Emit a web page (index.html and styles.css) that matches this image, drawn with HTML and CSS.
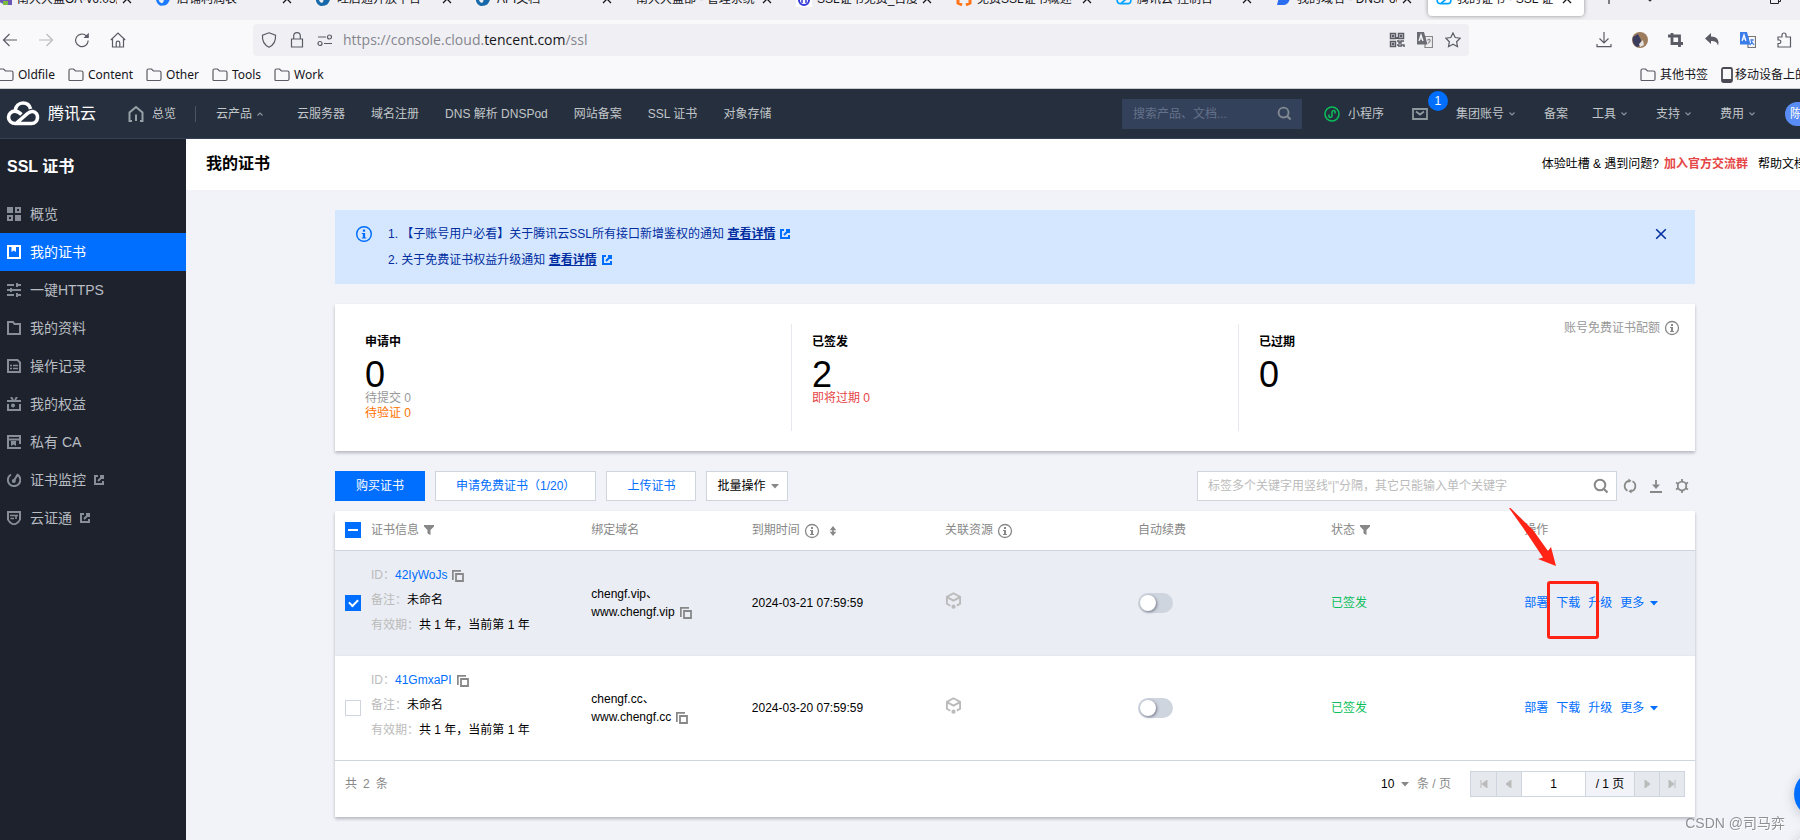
FILE: index.html
```html
<!DOCTYPE html>
<html lang="zh-CN">
<head>
    <meta charset="UTF-8">
    <meta name="viewport" content="width=device-width, initial-scale=1.0">
    <title>我的证书 - SSL 证书 - 控制台</title>
    <link rel="stylesheet" href="styles.css">
</head>
<body>
    <!-- Shared icons -->
    <svg class="sprite" width="0" height="0">
        <symbol id="i-folder" viewBox="0 0 16 16"><path d="M1 13V3.500a1.500 1.500 0 0 1 1.500-1.500h3l2 2h6a1.500 1.500 0 0 1 1.500 1.500V12a1.500 1.500 0 0 1-1.500 1.500H1.500z" fill="none" stroke="#5b5b66" stroke-width="1.200"/></symbol>
        <symbol id="i-close" viewBox="0 0 10 10"><path d="M1 1l8 8M9 1L1 9" fill="none" stroke="currentColor" stroke-width="1.300"/></symbol>
        <symbol id="i-down" viewBox="0 0 8 8"><path d="M1.500 2.500L4 5l2.500-2.500" fill="none" stroke="currentColor" stroke-width="1.200"/></symbol>
        <symbol id="i-tri" viewBox="0 0 8 8"><path d="M0 2h8L4 6.500z" fill="currentColor"/></symbol>
        <symbol id="i-info" viewBox="0 0 16 16"><circle cx="8" cy="8" r="6.500" fill="none" stroke="currentColor" stroke-width="1.300"/><path d="M7 4h2v2H7zM6 7h3v4h1v1H6v-1h1V8H6z" fill="currentColor"/></symbol>
        <symbol id="i-ext" viewBox="0 0 10 10"><path d="M4 1H1v8h8V6M6 1h3v3M9 1L4 6" fill="none" stroke="currentColor" stroke-width="2"/></symbol>
        <symbol id="i-copy" viewBox="0 0 12 12"><path d="M.8 10V.8H9M4 4h7v7H4z" fill="none" stroke="currentColor" stroke-width="1.800"/></symbol>
        <symbol id="i-filter" viewBox="0 0 10 10"><path d="M0 0h10v1.500L6.500 5v5l-3-1.500V5L0 1.500z" fill="currentColor"/></symbol>
        <symbol id="i-search" viewBox="0 0 16 16"><circle cx="7" cy="7" r="5.300" fill="none" stroke="currentColor" stroke-width="2"/><path d="M11 11l3.500 3.500" stroke="currentColor" stroke-width="2.200"/></symbol>
        <symbol id="i-cube" viewBox="0 0 16 16"><path d="M5 13L1.800 11V4.500L8 1.200l6.200 3.300V11l-3 1.800M1.800 4.800L8 8.200l6.200-3.400" fill="none" stroke="currentColor" stroke-width="1.800"/><circle cx="8" cy="13.800" r="2" fill="currentColor"/></symbol>
        <symbol id="i-cloud" viewBox="0 0 34 25"><path d="M10 22.500L21.500 12.500c2-1.800 3.600-2.300 5.300-2 3 .5 5 3 4.700 6.300-.3 3-2.600 5.700-6 5.700H9.500c-4 0-7-2.600-7-6.200 0-3.300 2.800-6.200 6.500-6.200 2.500 0 4.200 1.200 6.500 3.400M9.300 9.500C9.800 5 13 2 17 2c3.800 0 6.700 2.500 7.600 6" fill="none" stroke="currentColor" stroke-width="3.600"/></symbol>
    </svg>

    <!-- Browser tabs -->
    <div class="tabs">
        <div class="tab"><svg class="favicon" viewBox="0 0 16 16"><path d="M0 9h16v5H9z" fill="#6b57b8"/><path d="M7 10h5v4H7z" fill="#7dbb42"/></svg><span class="tab-title">南大大盆OA-v6.03版</span><svg class="x"><use href="#i-close"/></svg></div>
        <div class="tab"><svg class="favicon" viewBox="0 0 16 16"><path d="M1 7c1 8 7 8 8 3s3-6 4-6-1 10-6 9" fill="none" stroke="#1d7bff" stroke-width="2.600"/></svg><span class="tab-title">店铺利润表</span><svg class="x"><use href="#i-close"/></svg></div>
        <div class="tab"><svg class="favicon" viewBox="0 0 16 16"><path d="M1 7c1 8 7 8 8 3s3-6 4-6-1 10-6 9" fill="none" stroke="#1769aa" stroke-width="3.200"/></svg><span class="tab-title">旺店通开放平台</span><svg class="x"><use href="#i-close"/></svg></div>
        <div class="tab"><svg class="favicon" viewBox="0 0 16 16"><path d="M1 7c1 8 7 8 8 3s3-6 4-6-1 10-6 9" fill="none" stroke="#1769aa" stroke-width="3.200"/></svg><span class="tab-title">API文档</span><svg class="x"><use href="#i-close"/></svg></div>
        <div class="tab"><span class="tab-title">南大大盆部 - 管理系统</span><svg class="x"><use href="#i-close"/></svg></div>
        <div class="tab"><svg class="favicon" viewBox="0 0 16 16"><rect width="16" height="16" fill="#fff"/><circle cx="8" cy="9" r="5" fill="none" stroke="#3338d8" stroke-width="2"/><path d="M6 8v4M10 8v4" stroke="#3338d8" stroke-width="1.500"/></svg><span class="tab-title">SSL证书免费_百度搜索</span><svg class="x"><use href="#i-close"/></svg></div>
        <div class="tab"><svg class="favicon" viewBox="0 0 16 16"><path d="M5 3H2v9l4 2M11 3h3v9l-4 2" fill="none" stroke="#ff7316" stroke-width="3"/></svg><span class="tab-title">免费SSL证书概述</span><svg class="x"><use href="#i-close"/></svg></div>
        <div class="tab"><svg class="favicon blue"><use href="#i-cloud"/></svg><span class="tab-title">腾讯云-控制台</span><svg class="x"><use href="#i-close"/></svg></div>
        <div class="tab"><svg class="favicon" viewBox="0 0 16 16"><path d="M4 2h5c7 0 6 11-1 12H1z" fill="#2b6ff0"/></svg><span class="tab-title">我的域名 - DNSPod</span><svg class="x"><use href="#i-close"/></svg></div>
        <div class="tab tab-active"><svg class="favicon blue"><use href="#i-cloud"/></svg><span class="tab-title">我的证书 - SSL 证书</span><svg class="x"><use href="#i-close"/></svg></div>
        <svg class="tab-ctl" viewBox="0 0 16 16"><path d="M8 1v13M1 8h14" stroke="#333" stroke-width="1.200"/></svg>
        <svg class="tab-ctl" viewBox="0 0 16 16"><path d="M3 6l5 5 5-5" fill="none" stroke="#333" stroke-width="1.200"/></svg>
        <svg class="tab-ctl win" viewBox="0 0 16 16"><path d="M3.500 5.500h8v8h-8zM5.500 5V3.500h8v8H12" fill="none" stroke="#222"/></svg>
    </div>

    <!-- Browser toolbar -->
    <div class="nav">
        <button class="nav-btn" aria-label="后退"><svg viewBox="0 0 16 16"><path d="M15 8H1.500M7.500 2l-6 6 6 6"/></svg></button>
        <button class="nav-btn off" aria-label="前进"><svg viewBox="0 0 16 16"><path d="M1 8h13.500M8.500 2l6 6-6 6"/></svg></button>
        <button class="nav-btn" aria-label="刷新"><svg viewBox="0 0 16 16"><path d="M14.200 8.500A6.300 6.300 0 1 1 12.500 4"/><path d="M14.800.8V6H9.500z" fill="#5b5b66" stroke="none"/></svg></button>
        <button class="nav-btn" aria-label="主页"><svg viewBox="0 0 16 16"><path d="M.8 8L8 1l7.200 7M2.500 7v8h11V7M6.200 15v-4a1.800 1.800 0 0 1 3.600 0v4"/></svg></button>
        <div class="url">
            <svg viewBox="0 0 16 16"><path d="M8 .8l6.500 2.500C15 9 12.500 13 8 15.300 3.500 13 1 9 1.500 3.300z"/></svg>
            <svg viewBox="0 0 16 16"><path d="M2.500 7h11v8h-11zM4.700 7V4a3.300 3.300 0 0 1 6.600 0v3"/></svg>
            <svg viewBox="0 0 16 16"><path d="M1 5h8M7 11.500h8"/><circle cx="12.500" cy="5" r="2"/><circle cx="3" cy="11.500" r="2"/></svg>
            <span class="address">https://console.cloud.<b>tencent.com</b>/ssl</span>
            <svg viewBox="0 0 16 16"><path d="M1.500 1.500h5v5h-5zM9.500 1.500h5v5h-5zM1.500 9.500h5v5h-5zM3.500 3.500h1v1h-1zM11.500 3.500h1v1h-1zM3.500 11.500h1v1h-1zM8 9h2v2h2V9h3M8 13h2v2M12 15v-2h3v2M8 7V5" stroke-width="1.500"/></svg>
            <svg viewBox="0 0 16 16"><path d="M8 4.500h7.500v11H8z" stroke="#888"/><path d="M0 0h7l3.500 12.500H0z" fill="#6b6b74" stroke="none"/><path d="M2 9l2-6 2 6M2.800 7h2.500" stroke="#fff"/><path d="M10.500 8.500c1-2 3-1 2.500.5s-1.500 1-1.500 2.500" stroke="#888"/></svg>
            <svg viewBox="0 0 16 16"><path d="M8 .9l2.200 4.600 5 .7-3.600 3.500.9 5L8 12.300l-4.500 2.400.9-5L.8 6.200l5-.7z"/></svg>
        </div>
        <button class="nav-btn" aria-label="下载"><svg viewBox="0 0 16 16"><path d="M8 0v11M3.500 6.500L8 11l4.500-4.500M1 12v2.700h14V12"/></svg></button>
        <button class="nav-btn" aria-label="头像"><svg viewBox="0 0 16 16"><circle cx="8" cy="8" r="8" fill="#9c7c5c" stroke="none"/><path d="M1 5l5-3 3 6-1 6-3 1C1 13 0 8 1 5z" fill="#3b3c5e" stroke="none"/><path d="M7 12l4-4 1 5-4 2z" fill="#e6e1dd" stroke="none"/></svg></button>
        <button class="nav-btn" aria-label="截图"><svg viewBox="0 0 16 16"><path d="M4 1v10.500h11M0 4h11.500v11" stroke-width="2.800"/></svg></button>
        <button class="nav-btn" aria-label="撤销"><svg viewBox="0 0 16 16"><path d="M1 6.500L7 1v3.500c7 0 8.500 5 7 9-1-3.500-3-4.500-7-4.500V12z" fill="#5b5b66" stroke="none"/></svg></button>
        <button class="nav-btn" aria-label="翻译"><svg viewBox="0 0 16 16"><path d="M8 4.500h7.500v11H8z" stroke="#777"/><path d="M0 0h7l3.500 12.500H0z" fill="#3b7de8" stroke="none"/><path d="M2 9l2-6 2 6M2.800 7h2.500" stroke="#fff"/><path d="M10 8h4M12 7v1c0 3-1 4-2 5M11 9l3 4" stroke="#3b7de8"/></svg></button>
        <button class="nav-btn" aria-label="扩展"><svg viewBox="0 0 16 16"><path d="M2 5h4V3a2 2 0 0 1 4 0v2h4.500v10H2v-3.500h1.500a1.800 1.800 0 0 0 0-3.500H2z"/></svg></button>
    </div>

    <!-- Bookmarks -->
    <div class="bookmarks">
        <a href="#"><svg><use href="#i-folder"/></svg>Oldfile</a>
        <a href="#"><svg><use href="#i-folder"/></svg>Content</a>
        <a href="#"><svg><use href="#i-folder"/></svg>Other</a>
        <a href="#"><svg><use href="#i-folder"/></svg>Tools</a>
        <a href="#"><svg><use href="#i-folder"/></svg>Work</a>
        <a href="#" class="push"><svg><use href="#i-folder"/></svg>其他书签</a>
        <a href="#" class="cut"><svg class="phone" viewBox="0 0 12 16"><rect x="1" y="1" width="10" height="14" rx="1.500" fill="none" stroke="#4a4a55" stroke-width="1.800"/><path d="M1 13h10" stroke="#4a4a55" stroke-width="2"/></svg>移动设备上的书签</a>
    </div>

    <!-- Console header -->
    <header class="header">
        <a href="#" class="logo"><svg><use href="#i-cloud"/></svg>腾讯云</a>
        <a href="#" class="home"><svg viewBox="0 0 16 16"><path d="M4 15H1.500V6.500L8 1l6.500 5.500V15H12M8 8.500V15" fill="none" stroke="currentColor" stroke-width="2"/></svg>总览</a>
        <nav class="menu">
            <a href="#" class="products">云产品<svg class="caret up"><use href="#i-down"/></svg></a>
            <a href="#">云服务器</a>
            <a href="#">域名注册</a>
            <a href="#">DNS 解析 DNSPod</a>
            <a href="#">网站备案</a>
            <a href="#">SSL 证书</a>
            <a href="#">对象存储</a>
        </nav>
        <label class="top-search">
            <input type="text" placeholder="搜索产品、文档..." aria-label="搜索产品、文档">
            <svg><use href="#i-search"/></svg>
        </label>
        <div class="account">
            <a href="#" class="mini"><svg viewBox="0 0 16 16"><circle cx="8" cy="8" r="7" fill="none" stroke="#0abf5b" stroke-width="1.600"/><path d="M5.500 8.500a1.600 1.600 0 1 0 2.500 1.300V6.200a1.600 1.600 0 1 1 2.500 1.300" fill="none" stroke="#0abf5b" stroke-width="1.500"/></svg>小程序</a>
            <a href="#" class="mail" aria-label="站内信"><svg viewBox="0 0 16 12"><path d="M1 1h14v10H1zM4 3.500l4 3 4-3" fill="none" stroke="currentColor" stroke-width="1.800"/></svg><span class="badge">1</span></a>
            <a href="#" class="group">集团账号<svg class="caret"><use href="#i-down"/></svg></a>
            <a href="#">备案</a>
            <a href="#">工具<svg class="caret"><use href="#i-down"/></svg></a>
            <a href="#" class="wide">支持<svg class="caret"><use href="#i-down"/></svg></a>
            <a href="#" class="wide">费用<svg class="caret"><use href="#i-down"/></svg></a>
            <span class="avatar">陈</span>
        </div>
    </header>

    <div class="layout">
        <aside class="sidebar">
            <h2>SSL 证书</h2>
            <a href="#"><svg viewBox="0 0 14 14"><path d="M0 0h6v6H0zM8 8h6v6H8z" fill="currentColor" stroke="none"/><path d="M9 1h4v4H9zM1 9h4v4H1z"/></svg>概览</a>
            <a href="#" class="active"><svg viewBox="0 0 14 14"><path d="M1 1h12v12H1z"/><path d="M4.500 1h4.500v6L6.800 5.500 4.500 7z" fill="currentColor" stroke="none"/></svg>我的证书</a>
            <a href="#"><svg viewBox="0 0 14 14"><path d="M0 2h7M9 2h5M10 0v4M0 7h3M5 7h9M4 5v4M0 12h7M9 12h5M10 10v4"/></svg>一键HTTPS</a>
            <a href="#"><svg viewBox="0 0 14 14"><path d="M1 13V1h5l1.500 2H13v10z"/></svg>我的资料</a>
            <a href="#"><svg viewBox="0 0 14 14"><path d="M1 1h9.500L13 3.500V13H1z"/><path d="M3 6.500h2M6 6.500h5M3 9.500h2M6 9.500h5" stroke-width="1.600"/></svg>操作记录</a>
            <a href="#"><svg viewBox="0 0 14 14"><path d="M0 4h14M1 7v6h12V7M4 0l2 3M10 0L8 3"/><circle cx="6" cy="8.500" r="1" fill="currentColor"/></svg>我的权益</a>
            <a href="#"><svg viewBox="0 0 14 14"><path d="M14 13H1V1h12v8M1 4.500h12"/><path d="M4 6h5v5L6.500 9.500 4 11z" fill="currentColor" stroke="none"/></svg>私有 CA</a>
            <a href="#"><svg viewBox="0 0 14 14"><path d="M4 1.500a6.200 6.200 0 1 0 6.500.2M11 1L7 7.500"/><circle cx="6.800" cy="8" r="1" fill="currentColor"/></svg>证书监控<svg class="ext"><use href="#i-ext"/></svg></a>
            <a href="#"><svg viewBox="0 0 14 14"><path d="M1 1h12v7.500c-1 2.500-3 4-6 5-3-1-5-2.500-6-5z"/><path d="M3 4.500h8M3.500 7.500H7M9 5v3" stroke-width="1.600"/></svg>云证通<svg class="ext"><use href="#i-ext"/></svg></a>
        </aside>

        <main class="main">
            <div class="page-head">
                <h1>我的证书</h1>
                <div class="page-links"><span>体验吐槽 &amp; 遇到问题?</span><a href="#" class="join">加入官方交流群</a><a href="#" class="help">帮助文档</a></div>
            </div>

            <div class="content">
                <div class="alert">
                    <svg class="alert-icon"><use href="#i-info"/></svg>
                    <div class="alert-text">
                        <p>1. 【子账号用户必看】关于腾讯云SSL所有接口新增鉴权的通知 <a href="#">查看详情</a><svg class="ext"><use href="#i-ext"/></svg></p>
                        <p>2. 关于免费证书权益升级通知 <a href="#">查看详情</a><svg class="ext"><use href="#i-ext"/></svg></p>
                    </div>
                    <button class="alert-close" aria-label="关闭"><svg><use href="#i-close"/></svg></button>
                </div>

                <div class="stats">
                    <section class="stat">
                        <div>
                            <h3>申请中</h3>
                            <div class="num">0</div>
                            <p class="gray">待提交 0</p>
                            <p class="orange">待验证 0</p>
                        </div>
                    </section>
                    <section class="stat">
                        <div>
                            <h3>已签发</h3>
                            <div class="num">2</div>
                            <p class="red">即将过期 0</p>
                        </div>
                    </section>
                    <section class="stat">
                        <div>
                            <h3>已过期</h3>
                            <div class="num">0</div>
                        </div>
                        <div class="quota">账号免费证书配额<svg class="info"><use href="#i-info"/></svg></div>
                    </section>
                </div>

                <div class="actions">
                    <button class="btn primary">购买证书</button>
                    <button class="btn">申请免费证书（1/20）</button>
                    <button class="btn">上传证书</button>
                    <button class="btn drop">批量操作<svg class="tri"><use href="#i-tri"/></svg></button>
                    <label class="search">
                        <input type="text" placeholder="标签多个关键字用竖线“|”分隔，其它只能输入单个关键字" aria-label="搜索证书">
                        <svg><use href="#i-search"/></svg>
                    </label>
                    <div class="tools">
                        <button aria-label="刷新"><svg viewBox="0 0 14 14"><path d="M4.500 11.700A5.300 5.300 0 0 1 6 1.800M9.500 2.300A5.300 5.300 0 0 1 8 12.200"/><path d="M5.500-.5v4.600L8.500 1.800zM8.500 14.500V9.900L5.500 12.200z" fill="#888" stroke="none"/></svg></button>
                        <button aria-label="下载"><svg viewBox="0 0 14 14"><path d="M7 1v5M1 13h12"/><path d="M3 5.500h8L7 10z" fill="#888" stroke="none"/></svg></button>
                        <button aria-label="设置"><svg viewBox="0 0 14 14"><circle cx="7" cy="7" r="4.300"/><path d="M7 0v3M7 11v3M1 3.500l2.500 1.500M10.500 9l2.500 1.500M1 10.500L3.500 9M10.500 5L13 3.500"/></svg></button>
                    </div>
                </div>

                <div class="panel">
                    <table class="certs">
                        <colgroup>
                            <col class="c-check"><col class="c-info"><col class="c-domain"><col class="c-std"><col class="c-std"><col class="c-std"><col class="c-std"><col>
                        </colgroup>
                        <thead>
                            <tr>
                                <th class="check"><input type="checkbox" class="box some" aria-label="全选"></th>
                                <th>证书信息<svg class="filter"><use href="#i-filter"/></svg></th>
                                <th>绑定域名</th>
                                <th>到期时间<svg class="info"><use href="#i-info"/></svg><svg class="sort" viewBox="0 0 8 12"><path d="M0 5l4-5 4 5zM0 7h8l-4 5z" fill="currentColor"/><path d="M4 3v6" stroke="currentColor" stroke-width="2"/></svg></th>
                                <th>关联资源<svg class="info"><use href="#i-info"/></svg></th>
                                <th>自动续费</th>
                                <th>状态<svg class="filter"><use href="#i-filter"/></svg></th>
                                <th>操作</th>
                            </tr>
                        </thead>
                        <tbody>
                            <tr class="selected">
                                <td class="check"><input type="checkbox" class="box" checked aria-label="选择 42IyWoJs"></td>
                                <td class="cert">
                                    <p><span>ID：</span><a href="#">42IyWoJs</a><svg class="copy"><use href="#i-copy"/></svg></p>
                                    <p><span>备注：</span>未命名</p>
                                    <p><span>有效期：</span>共 1 年，当前第 1 年</p>
                                </td>
                                <td>chengf.vip、<br>www.chengf.vip<svg class="copy"><use href="#i-copy"/></svg></td>
                                <td>2024-03-21 07:59:59</td>
                                <td><svg class="cube"><use href="#i-cube"/></svg></td>
                                <td><input type="checkbox" class="switch" aria-label="自动续费"></td>
                                <td class="ok">已签发</td>
                                <td><div class="ops"><a href="#">部署</a><a href="#">下载</a><a href="#">升级</a><a href="#">更多<svg class="tri"><use href="#i-tri"/></svg></a></div></td>
                            </tr>
                            <tr>
                                <td class="check"><input type="checkbox" class="box" aria-label="选择 41GmxaPI"></td>
                                <td class="cert">
                                    <p><span>ID：</span><a href="#">41GmxaPI</a><svg class="copy"><use href="#i-copy"/></svg></p>
                                    <p><span>备注：</span>未命名</p>
                                    <p><span>有效期：</span>共 1 年，当前第 1 年</p>
                                </td>
                                <td>chengf.cc、<br>www.chengf.cc<svg class="copy"><use href="#i-copy"/></svg></td>
                                <td>2024-03-20 07:59:59</td>
                                <td><svg class="cube"><use href="#i-cube"/></svg></td>
                                <td><input type="checkbox" class="switch" aria-label="自动续费"></td>
                                <td class="ok">已签发</td>
                                <td><div class="ops"><a href="#">部署</a><a href="#">下载</a><a href="#">升级</a><a href="#">更多<svg class="tri"><use href="#i-tri"/></svg></a></div></td>
                            </tr>
                        </tbody>
                    </table>

                    <div class="pager">
                        <div class="total"><span>共</span><span>2</span><span>条</span></div>
                        <label class="size"><select aria-label="每页条数"><option>10</option><option>20</option></select><svg class="tri"><use href="#i-tri"/></svg><span>条 / 页</span></label>
                        <div class="pages">
                            <button aria-label="首页" disabled><svg viewBox="0 0 8 8"><path d="M1 0v8M7 0v8L2 4z"/></svg></button>
                            <button aria-label="上一页" disabled><svg viewBox="0 0 8 8"><path d="M6 0v8L1 4z"/></svg></button>
                            <input type="text" value="1" aria-label="页码">
                            <span>/ 1 页</span>
                            <button aria-label="下一页" disabled><svg viewBox="0 0 8 8"><path d="M2 0v8l5-4z"/></svg></button>
                            <button aria-label="末页" disabled><svg viewBox="0 0 8 8"><path d="M7 0v8M1 0v8l5-4z"/></svg></button>
                        </div>
                    </div>

                    <!-- Callout on the download link -->
                    <svg class="arrow" viewBox="0 0 48 60"><path d="M0 0h1.500L24 22 39 43l3-4 5 19-18-7 5-1.500L17 24z" fill="#ff2416"/></svg>
                    <div class="mark"></div>
                </div>
            </div>
        </main>
    </div>

    <button class="float float-blue" aria-label="客服"></button>
    <button class="float float-white" aria-label="反馈"></button>
    <div class="watermark">CSDN @司马弈</div>
</body>
</html>
```

FILE: styles.css
```css
* {
    margin: 0;
    padding: 0;
    box-sizing: border-box;
}

body {
    display: flex;
    flex-direction: column;
    min-height: 100vh;
    overflow: hidden;
    background: #f2f3f8;
    color: #000;
    font: 12px/18px "Liberation Sans", "Noto Sans CJK SC", sans-serif;
}

a {
    color: inherit;
    text-decoration: none;
}

button,
input,
select {
    font: inherit;
    color: inherit;
    border: none;
    background: none;
}

button {
    cursor: pointer;
}

svg {
    flex: none;
}

.sprite {
    position: absolute;
}

/* Browser tabs */
.tabs {
    display: flex;
    align-items: flex-end;
    height: 20px;
    padding-bottom: 4px;
    margin-left: -12px;
    background: #f0f0f4;
    overflow: hidden;
    color: #15141a;
}

.tab {
    display: flex;
    align-items: center;
    gap: 5px;
    flex: none;
    width: 156px;
    height: 36px;
    margin-right: 4px;
    padding: 2px 12px 0 8px;
    border-radius: 4px;
}

.tab-active {
    background: #fff;
    box-shadow: 0 0 4px rgba(0, 0, 0, 0.4);
}

.tab-title {
    flex: 1;
    overflow: hidden;
    white-space: nowrap;
}

.favicon {
    width: 16px;
    height: 16px;
}

.blue {
    color: #00a3ff;
}

.x {
    width: 10px;
    height: 10px;
}

.tab-ctl {
    width: 16px;
    height: 16px;
    margin: 0 12px 10px 13px;
}

.win {
    margin-left: auto;
    margin-right: 17px;
}

/* Browser toolbar */
.nav {
    display: flex;
    align-items: center;
    height: 40px;
    margin: 0 -2px 0 -8px;
    background: #f9f9fb;
}

.nav-btn {
    display: flex;
    align-items: center;
    justify-content: center;
    width: 36px;
    height: 32px;
}

.off {
    opacity: 0.4;
}

.nav svg {
    width: 16px;
    height: 16px;
    fill: none;
    stroke: #5b5b66;
    stroke-width: 1.2;
}

.url {
    display: flex;
    align-items: center;
    gap: 12px;
    flex: 1;
    height: 32px;
    margin: 0 117px;
    padding: 0 8px;
    border-radius: 4px;
    background: #f0f0f4;
}

.address {
    flex: 1;
    margin-left: -2px;
    color: #85858d;
    font: 14px/20px "Open Sans", "Noto Sans", sans-serif;
}

.address b {
    color: #15141a;
    font-weight: normal;
}

.bookmarks {
    display: flex;
    align-items: center;
    gap: 13px;
    height: 29px;
    padding-top: 1px;
    margin-left: -2px;
    border-bottom: 1px solid #ccc;
    background: #f9f9fb;
    color: #15141a;
    font-family: "Noto Sans", "Noto Sans CJK SC", sans-serif;
}

.bookmarks a {
    display: flex;
    align-items: center;
    gap: 4px;
    white-space: nowrap;
}

.bookmarks svg {
    width: 16px;
    height: 16px;
}

.bookmarks .push {
    margin-left: auto;
}

.bookmarks .cut {
    width: 79px;
    gap: 2px;
    overflow: hidden;
}

.bookmarks .phone {
    width: 12px;
}

/* Console header */
.header {
    display: flex;
    align-items: center;
    height: 50px;
    padding-left: 6px;
    border-bottom: 1px solid #344258;
    background: #262f3e;
    color: #c1c6c8;
    white-space: nowrap;
}

.header a {
    display: flex;
    align-items: center;
}

.logo {
    gap: 8px;
    color: #fff;
    font-size: 16px;
}

.logo svg {
    width: 34px;
    height: 25px;
}

.home {
    gap: 8px;
    margin-left: 32px;
    padding-right: 19px;
    border-right: 1px solid #495366;
    line-height: 16px;
}

.home svg {
    width: 16px;
    height: 16px;
    color: #96a0a5;
}

.menu {
    display: flex;
    gap: 26px;
    margin-left: 20px;
}

.products {
    margin-right: 7px;
}

.caret {
    width: 8px;
    height: 8px;
    margin-left: 4px;
    color: #8a9299;
}

.up {
    transform: rotate(180deg);
}

.top-search {
    display: flex;
    align-items: center;
    width: 180px;
    height: 30px;
    margin-left: auto;
    padding: 0 10px 0 11px;
    background: #33415a;
}

.top-search input,
.search input {
    flex: 1;
    min-width: 0;
    height: 28px;
    outline: none;
}

.top-search input::placeholder {
    color: #65718a;
}

.top-search svg {
    width: 15px;
    height: 15px;
    color: #828a92;
}

.account {
    display: flex;
    align-items: center;
    gap: 24px;
    margin-left: 22px;
}

.mini {
    gap: 8px;
    margin-right: 4px;
}

.mini svg {
    width: 16px;
    height: 16px;
}

.mail {
    position: relative;
    margin-right: 4px;
    color: #8f989d;
}

.mail svg {
    width: 16px;
    height: 12px;
}

.group {
    margin-right: 4px;
}

.badge {
    position: absolute;
    left: 16px;
    bottom: 9px;
    width: 20px;
    height: 20px;
    border-radius: 50%;
    background: #006eff;
    color: #fff;
    line-height: 20px;
    text-align: center;
}

.wide {
    margin-left: 4px;
}

.avatar {
    width: 15px;
    height: 24px;
    margin-left: 5px;
    padding-left: 5px;
    border-radius: 12px 0 0 12px;
    background: #5a8cf5;
    color: #fff;
    line-height: 24px;
    overflow: hidden;
}

.layout {
    display: flex;
    flex: 1;
}

/* Sidebar */
.sidebar {
    width: 186px;
    flex: none;
    background: #1e222d;
    color: #b8bdc2;
    font-size: 14px;
}

.sidebar h2 {
    padding: 16px 7px;
    color: #fff;
    font-size: 16px;
    line-height: 24px;
}

.sidebar a {
    display: flex;
    align-items: center;
    gap: 9px;
    height: 38px;
    padding-left: 7px;
}

.sidebar a svg {
    width: 14px;
    height: 14px;
    fill: none;
    stroke: currentColor;
    stroke-width: 2;
    color: #878e95;
}

.sidebar a .ext {
    width: 10px;
    height: 10px;
    margin-left: -1px;
    stroke: none;
}

.sidebar .active,
.sidebar .active svg {
    background: #006eff;
    color: #fff;
}

/* Page */
.main {
    flex: 1;
    min-width: 0;
}

.page-head {
    display: flex;
    align-items: center;
    justify-content: space-between;
    height: 51px;
    padding: 0 0 2px 20px;
    background: #fff;
}

.page-head h1 {
    font-size: 16px;
}

.page-links {
    display: flex;
    white-space: nowrap;
}

.join {
    margin: 0 10px 0 5px;
    color: #e54545;
    font-weight: bold;
}

.help {
    width: 42px;
    overflow: hidden;
}

.content {
    display: flex;
    flex-direction: column;
    gap: 20px;
    padding: 20px 105px 20px 149px;
}

.alert {
    display: flex;
    padding: 11px 28px 11px 20px;
    background: #d5e7ff;
    color: #002da0;
    line-height: 26px;
}

.alert-icon {
    width: 18px;
    height: 18px;
    margin: 4px 15px 0 0;
    color: #006eff;
}

.alert-text {
    flex: 1;
}

.alert-text a {
    font-weight: bold;
    text-decoration: underline;
}

.alert .ext {
    width: 10px;
    height: 10px;
    margin-left: 5px;
    color: #006eff;
    vertical-align: -1px;
}

.alert-close {
    display: flex;
    align-items: center;
    height: 26px;
}

.alert-close svg {
    width: 12px;
    height: 12px;
}

.stats {
    display: flex;
    padding: 20px 10px;
    background: #fff;
    box-shadow: 0 2px 3px rgba(54, 58, 80, 0.32);
}

.stat {
    display: flex;
    justify-content: space-between;
    flex: 1;
    height: 107px;
    padding: 9px 0 0 20px;
    line-height: 15px;
}

.stat + .stat {
    border-left: 1px solid #e5e8ed;
}

.stat h3 {
    margin-bottom: 8px;
    font-size: 12px;
    line-height: 18px;
}

.num {
    font-size: 36px;
    line-height: 32px;
}

.gray {
    color: #999;
}

.orange {
    color: #ff7200;
}

.red {
    color: #e54545;
}

.quota {
    display: flex;
    align-items: center;
    height: 18px;
    margin: -14px 5px 0 0;
    color: #999;
}

.info {
    width: 16px;
    height: 16px;
    margin-left: 4px;
    color: #888;
    vertical-align: middle;
}

/* Buttons and search */
.actions {
    display: flex;
    gap: 10px;
}

.btn {
    height: 30px;
    padding: 0 20px;
    border: 1px solid #cfd5de;
    background: #fff;
    color: #006eff;
    white-space: nowrap;
}

.primary {
    border-color: #006eff;
    background: #006eff;
    color: #fff;
}

.drop {
    padding: 0 8px 0 10px;
    color: #000;
}

.tri {
    width: 8px;
    height: 8px;
    margin-left: 6px;
    color: #888;
}

.search {
    display: flex;
    align-items: center;
    width: 420px;
    height: 30px;
    margin-left: auto;
    padding: 0 7px 0 10px;
    border: 1px solid #cfd5de;
    background: #fff;
}

.search input::placeholder {
    color: #bbb;
}

.search svg {
    width: 16px;
    height: 16px;
    color: #888;
}

.tools {
    display: flex;
    margin-left: -10px;
}

.tools button {
    display: flex;
    align-items: center;
    justify-content: center;
    width: 26px;
}

.tools svg {
    width: 14px;
    height: 14px;
    overflow: visible;
    fill: none;
    stroke: #888;
    stroke-width: 1.8;
}

/* Certificate table */
.panel {
    position: relative;
    margin-top: -10px;
    background: #fff;
    box-shadow: 0 2px 3px rgba(54, 58, 80, 0.32);
}

.certs {
    width: 100%;
    table-layout: fixed;
    border-collapse: collapse;
}

.c-check {
    width: 26px;
}

.c-info {
    width: 16.2%;
}

.c-domain {
    width: 11.8%;
}

.c-std {
    width: 14.2%;
}

.certs th,
.certs td {
    padding: 0 10px;
    text-align: left;
    vertical-align: middle;
}

.certs .check {
    padding-right: 0;
}

.certs th {
    height: 39px;
    border-bottom: 1px solid #cfd5de;
    color: #888;
    font-weight: normal;
}

.certs td {
    height: 105px;
    border-bottom: 1px solid #e5e8ed;
}

.certs tr:last-child td {
    border-bottom-color: #cfd5de;
}

.selected {
    background: #eaedf3;
}

.certs .cert {
    padding-bottom: 5px;
    line-height: 25px;
}

.cert span {
    color: #bbb;
}

.cert a,
.ops {
    color: #006eff;
}

.copy {
    width: 12px;
    height: 12px;
    margin-left: 5px;
    color: #888;
    vertical-align: -3px;
}

.filter {
    width: 10px;
    height: 10px;
    margin-left: 5px;
    vertical-align: -1px;
}

.sort {
    width: 8px;
    height: 10px;
    margin-left: 9px;
    vertical-align: middle;
}

.cube {
    display: block;
    width: 17px;
    height: 17px;
    margin-bottom: 5px;
    color: #bbb;
}

.ok {
    color: #0abf5b;
}

.ops {
    display: flex;
    gap: 8px;
    white-space: nowrap;
}

.ops .tri {
    color: #006eff;
}

.box {
    display: block;
    width: 16px;
    height: 16px;
    appearance: none;
    border: 1px solid #cfd5de;
    background: #fff;
}

.box.some,
.box:checked {
    border-color: #006eff;
    background: #006eff;
}

.box.some::after {
    content: "";
    display: block;
    height: 2px;
    margin: 6px 2px;
    background: #fff;
}

.box:checked::after {
    content: "";
    display: block;
    box-sizing: border-box;
    width: 9px;
    height: 6px;
    margin: 3px auto;
    border: solid #fff;
    border-width: 0 0 2px 2px;
    transform: rotate(-45deg);
}

.switch {
    display: block;
    width: 35px;
    height: 20px;
    padding: 2px;
    appearance: none;
    border-radius: 10px;
    background: #cfd5de;
}

.switch::after {
    content: "";
    display: block;
    width: 16px;
    height: 16px;
    border-radius: 50%;
    background: #fff;
    box-shadow: 1px 1px 3px rgba(54, 58, 80, 0.6);
}

/* Pager */
.pager {
    display: flex;
    align-items: center;
    padding: 10px 10px 20px;
    color: #888;
}

.total {
    display: flex;
    gap: 6px;
    margin-right: auto;
}

.size {
    display: flex;
    align-items: center;
    margin-right: 19px;
}

.size select {
    appearance: none;
    color: #000;
}

.size span {
    margin-left: 8px;
}

.pages {
    display: flex;
    height: 26px;
    border: 1px solid #cfd5de;
    color: #000;
    line-height: 24px;
}

.pages > * + * {
    border-left: 1px solid #cfd5de;
}

.pages button {
    width: 25px;
    background: #e5e8ed;
}

.pages svg {
    width: 8px;
    height: 8px;
    fill: #bbb;
    stroke: #bbb;
}

.pages input {
    width: 64px;
    text-align: center;
}

.pages span {
    width: 49px;
    background: #f2f3f8;
    text-align: center;
}

/* Callout */
.arrow {
    position: absolute;
    top: -3px;
    right: 138px;
    width: 48px;
    height: 60px;
}

.mark {
    position: absolute;
    top: 70px;
    right: 96px;
    width: 52px;
    height: 58px;
    border: 3px solid #ff2416;
    border-radius: 3px;
}

/* Floating buttons */
.float {
    position: fixed;
    right: -42px;
    width: 48px;
    height: 48px;
    border-radius: 50%;
    box-shadow: 0 2px 12px rgba(54, 58, 80, 0.25);
}

.float-blue {
    bottom: 22px;
    background: #006eff;
}

.float-white {
    bottom: -38px;
    background: #fff;
}

.watermark {
    position: fixed;
    right: 15px;
    bottom: 6px;
    color: #8f8f94;
    font-size: 14px;
    line-height: 22px;
    text-shadow: 1px 1px 0 #fff;
}
```
